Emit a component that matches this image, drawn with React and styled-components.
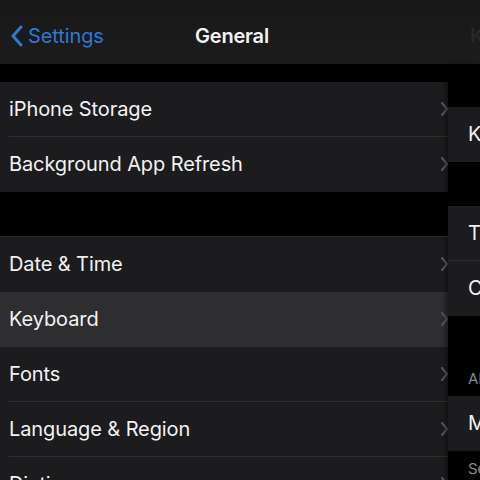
import React from 'react';
import styled, {createGlobalStyle} from 'styled-components';

const GlobalStyle = createGlobalStyle`
    html, body {
        margin: 0;
        padding: 0;
        background: #000;
    }
    body {
        font-family: Inter, "Noto Sans", "Liberation Sans", sans-serif;
        -webkit-font-smoothing: antialiased;
    }
`;

const Screen = styled.div`
    width: 480px;
    height: 480px;
    overflow: hidden;
    display: flex;
    flex-direction: column;
    background: #000;
`;

const NavBar = styled.div`
    height: 64px;
    flex-shrink: 0;
    display: flex;
    align-items: center;
    padding-top: 8px;
    box-sizing: border-box;
    overflow: hidden;
    background: linear-gradient(#181818, #1c1c1c);
`;

const BackButton = styled.div`
    flex-shrink: 0;
    display: flex;
    align-items: center;
    gap: 5px;
    padding-left: 10px;
    width: 185px;
    color: #2a7ad6;
    font-size: 20px;
    letter-spacing: -0.1px;
`;

const Title = styled.div`
    flex-shrink: 0;
    width: 263px;
    color: #f4f4f4;
    font-size: 20px;
    font-weight: 600;
    letter-spacing: -0.2px;
`;

const GhostTitle = styled.div`
    flex-shrink: 0;
    padding-left: 12px;
    color: #282828;
    font-size: 20px;
    font-weight: 600;
    white-space: nowrap;
`;

const Body = styled.div`
    flex: 1;
    display: flex;
    min-height: 0;
`;

const LeftPane = styled.div`
    width: 448px;
    flex-shrink: 0;
    padding-top: 17px;
    display: flex;
    flex-direction: column;
    gap: 45px;
`;

const Group = styled.div`
    display: flex;
    flex-direction: column;
    border-top: 1px solid ${p => (p.$lined ? '#2c2c2e' : 'transparent')};
    margin-top: ${p => (p.$lined ? '-1px' : '0')};
`;

const Row = styled.div`
    height: 55px;
    display: flex;
    padding-left: 9px;
    background: ${p => (p.$active ? '#2e2d30' : '#1c1c1e')};
`;

const RowInner = styled.div`
    flex: 1;
    display: flex;
    align-items: center;
    justify-content: space-between;
    border-bottom: 1px solid ${p => (p.$last ? 'transparent' : '#2f2f31')};
    color: #f2f2f2;
    font-size: 20px;
    letter-spacing: -0.1px;
    white-space: nowrap;
`;

const RightPane = styled.div`
    flex: 1;
    overflow: hidden;
    background: #000;
    padding-top: 43px;
    box-shadow: -3px 0 4px rgba(0, 0, 0, 0.35);
    display: flex;
    flex-direction: column;
`;

const Cell = styled.div`
    height: 55px;
    flex-shrink: 0;
    display: flex;
    align-items: center;
    padding-left: 20px;
    background: #1c1c1e;
    color: #f2f2f2;
    font-size: 20px;
    white-space: nowrap;
    border-bottom: 1px solid ${p => (p.$last ? 'transparent' : '#2f2f31')};
    box-sizing: border-box;
`;

const Spacer = styled.div`
    height: ${p => p.$h}px;
    flex-shrink: 0;
`;

const Caption = styled.div`
    flex-shrink: 0;
    height: ${p => p.$h}px;
    display: flex;
    align-items: ${p => (p.$top ? 'flex-start' : 'flex-end')};
    padding: ${p => (p.$top ? '8px 0 0 20px' : '0 0 8px 20px')};
    box-sizing: border-box;
    color: #8a8a8e;
    font-size: 15px;
    white-space: nowrap;
`;

const BackChevron = () => (
    <svg width="13" height="22" viewBox="0 0 13 22">
        <path d="M11 2 L3 11 L11 20" fill="none" stroke="#2a7ad6" strokeWidth="3" strokeLinecap="round" strokeLinejoin="round"/>
    </svg>
);

const Chevron = () => (
    <svg width="7" height="14" viewBox="0 0 7 14">
        <path d="M1 1 L6 7 L1 13" fill="none" stroke="#58585c" strokeWidth="2" strokeLinecap="round" strokeLinejoin="round"/>
    </svg>
);

const groups = [
    ['iPhone Storage', 'Background App Refresh'],
    ['Date & Time', 'Keyboard', 'Fonts', 'Language & Region', 'Dictionary'],
];

export default function App() {
    return (
        <Screen>
            <GlobalStyle/>
            <NavBar>
                <BackButton>
                    <BackChevron/>
                    Settings
                </BackButton>
                <Title>General</Title>
                <GhostTitle>Keyboards</GhostTitle>
            </NavBar>
            <Body>
                <LeftPane>
                    {groups.map((items, gi) => (
                        <Group key={gi} $lined={gi > 0}>
                            {items.map((label, i) => (
                                <Row key={label} $active={label === 'Keyboard'}>
                                    <RowInner $last={i === items.length - 1 || label === 'Keyboard' || items[i + 1] === 'Keyboard'}>
                                        {label}
                                        <Chevron/>
                                    </RowInner>
                                </Row>
                            ))}
                        </Group>
                    ))}
                </LeftPane>
                <RightPane>
                    <Cell $last>Keyboards</Cell>
                    <Spacer $h={44}/>
                    <Cell>Text Replacement</Cell>
                    <Cell $last>Caps Lock</Cell>
                    <Caption $h={80}>ALL KEYBOARDS</Caption>
                    <Cell $last>Method</Cell>
                    <Caption $h={40} $top>Select</Caption>
                </RightPane>
            </Body>
        </Screen>
    );
}
